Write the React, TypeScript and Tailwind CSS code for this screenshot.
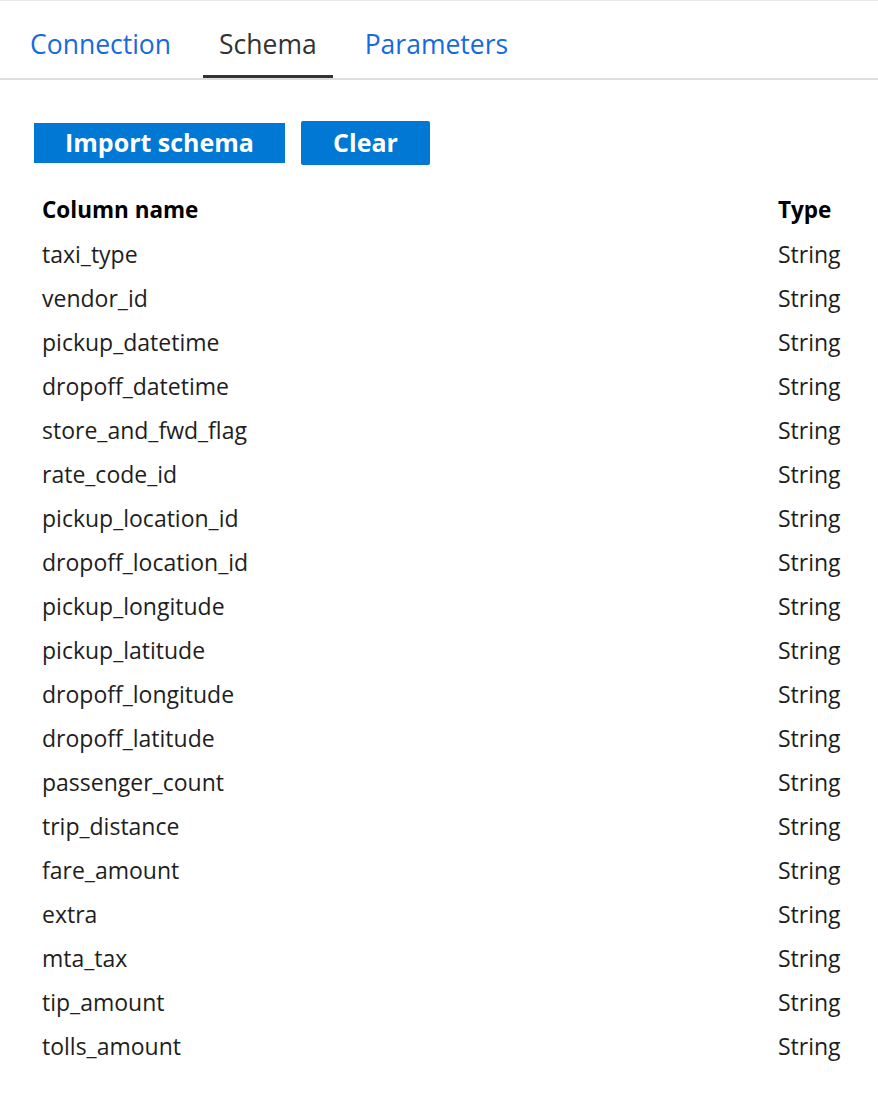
import { useState } from "react";

const columns = [
  "taxi_type",
  "vendor_id",
  "pickup_datetime",
  "dropoff_datetime",
  "store_and_fwd_flag",
  "rate_code_id",
  "pickup_location_id",
  "dropoff_location_id",
  "pickup_longitude",
  "pickup_latitude",
  "dropoff_longitude",
  "dropoff_latitude",
  "passenger_count",
  "trip_distance",
  "fare_amount",
  "extra",
  "mta_tax",
  "tip_amount",
  "tolls_amount",
];

const tabs = ["Connection", "Schema", "Parameters"];

export default function App() {
  const [active, setActive] = useState("Schema");

  return (
    <div className="h-[1096px] w-[878px] overflow-hidden border-t border-[#ebebeb] bg-white font-['Segoe_UI','Open_Sans',sans-serif] text-[#1e1e1e]">
      <div className="flex h-[79px] gap-4 border-b-2 border-[#dedede] pl-[14px]">
        {tabs.map((t) => (
          <button
            key={t}
            onClick={() => setActive(t)}
            className={`relative px-4 pt-[8px] text-[26.5px] leading-[36px] ${
              active === t ? "text-[#333]" : "text-[#1769e0]"
            }`}
          >
            {t}
            {active === t && <span className="absolute right-0 bottom-0 left-0 h-[3px] bg-[#333]" />}
          </button>
        ))}
      </div>

      <div className="flex items-center gap-4 pt-[41px] pl-[34px]">
        <button className="h-10 w-[251px] bg-[#0078d4] text-[25px] font-bold text-white">Import schema</button>
        <button className="h-11 w-[129px] rounded-[2px] bg-[#0078d4] text-[25px] font-bold text-white">Clear</button>
      </div>

      <div className="pt-[23px] pr-[38px] pl-[42px]">
        <div className="flex h-[44px] items-center justify-between text-[22.5px] font-bold text-black">
          <span>Column name</span>
          <span className="w-[62px]">Type</span>
        </div>
        {columns.map((c) => (
          <div key={c} className="flex h-[44px] items-center justify-between text-[23px]">
            <span>{c}</span>
            <span className="w-[62px]">String</span>
          </div>
        ))}
      </div>
    </div>
  );
}
